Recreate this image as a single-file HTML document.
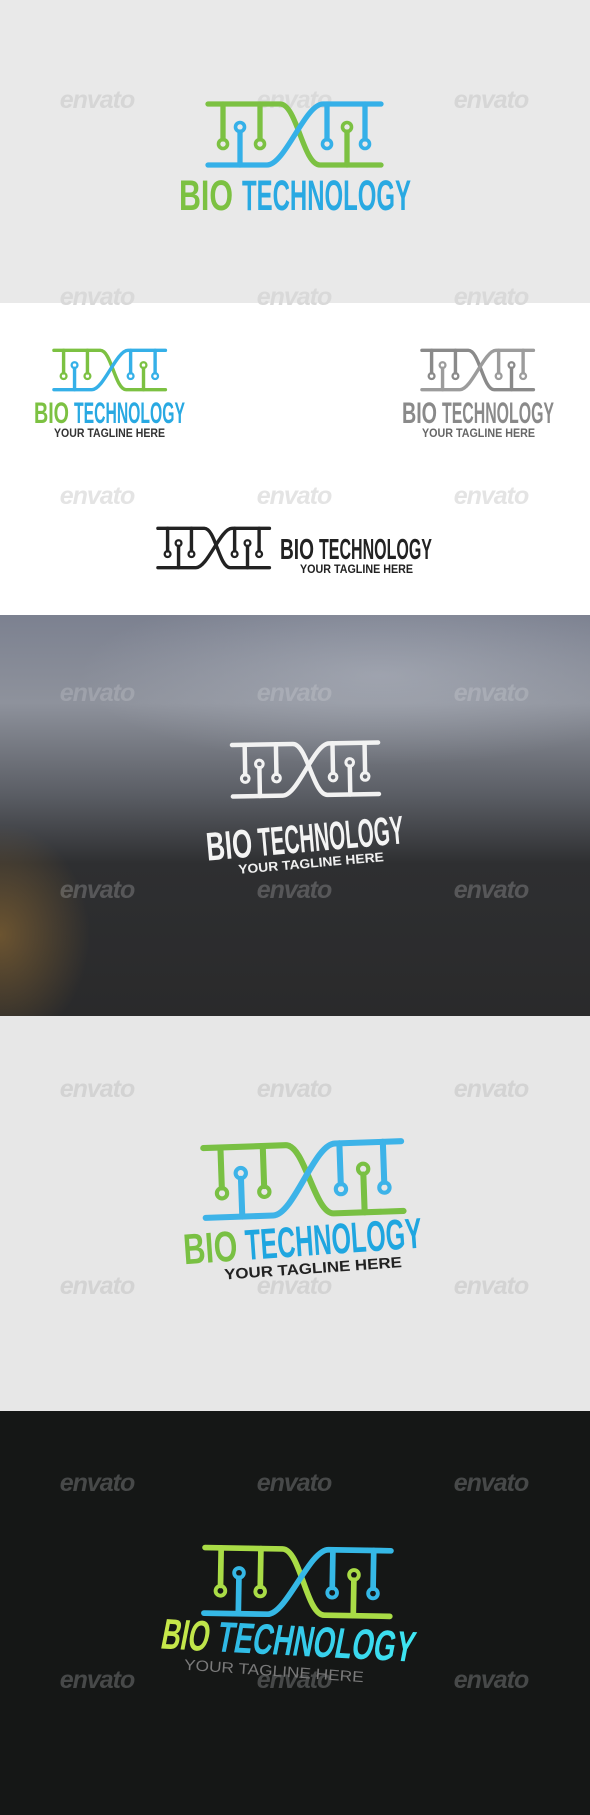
<!DOCTYPE html>
<html><head><meta charset="utf-8"><style>
*{margin:0;padding:0}
html,body{width:590px;height:1815px;overflow:hidden}
body{position:relative;background:#fff;font-family:"Liberation Sans",sans-serif}
.s{position:absolute;left:0;width:590px}
.wm{position:absolute;font:italic bold 25px "Liberation Sans",sans-serif;letter-spacing:-1px;width:110px;text-align:center}
svg{position:absolute}
</style></head><body>
<svg width="0" height="0" style="position:absolute">
<defs>
<symbol id="dna" viewBox="0 0 180 67">
<g fill="none" stroke-linecap="round" stroke-width="5.3">
<g stroke="var(--a)">
<path d="M3,3 H75 C92,3 98,64 115,64 H176"/>
<path d="M18,3 V38 M55,3 V38 M142,64 V31" />
<circle cx="18" cy="43" r="4.5" stroke-width="3.6"/>
<circle cx="55" cy="43" r="4.5" stroke-width="3.6"/>
<circle cx="142" cy="26" r="4.5" stroke-width="3.6"/>
</g>
<g stroke="var(--b)">
<path d="M3,64 H62 C80,64 100,3 118,3 H176"/>
<path d="M35,64 V31 M122,3 V38 M160,3 V38"/>
<circle cx="35" cy="26" r="4.5" stroke-width="3.6"/>
<circle cx="122" cy="43" r="4.5" stroke-width="3.6"/>
<circle cx="160" cy="43" r="4.5" stroke-width="3.6"/>
</g>
</g>
</symbol>
<linearGradient id="s5g" x1="0" x2="1"><stop offset="0" stop-color="#c8e84a"/><stop offset="1" stop-color="#8fd44a"/></linearGradient>
<linearGradient id="s5b" x1="0" x2="1"><stop offset="0" stop-color="#2aa8e0"/><stop offset="1" stop-color="#3ee6f2"/></linearGradient>
</defs>
</svg>

<div class="s" style="top:0;height:303px;background:#e9e9e9"></div>
<div class="s" style="top:303px;height:312px;background:#fff"></div>
<div class="s" style="top:615px;height:401px;background:linear-gradient(180deg,#7c8190 0%,#8e929c 22%,#5a5d64 45%,#2e2f31 62%,#2a2a2b 100%)"></div>
<div class="s" style="top:615px;height:401px;background:radial-gradient(ellipse 90px 110px at 0px 320px,rgba(150,110,50,.6),rgba(150,110,50,0));"></div>
<div class="s" style="top:615px;height:401px;background:radial-gradient(ellipse 300px 90px at 380px 60px,rgba(200,205,215,.35),rgba(200,205,215,0));"></div>
<div class="s" style="top:1016px;height:395px;background:#e7e7e7"></div>
<div class="s" style="top:1411px;height:404px;background:#151716"></div>

<div class="wm" style="left:42px;top:86px;color:#d6d6d6">envato</div>
<div class="wm" style="left:239px;top:86px;color:#dadada">envato</div>
<div class="wm" style="left:436px;top:86px;color:#d6d6d6">envato</div>
<div class="wm" style="left:42px;top:283px;color:#d9d9d9">envato</div>
<div class="wm" style="left:239px;top:283px;color:#d9d9d9">envato</div>
<div class="wm" style="left:436px;top:283px;color:#d9d9d9">envato</div>
<div class="wm" style="left:42px;top:482px;color:#e4e4e4">envato</div>
<div class="wm" style="left:239px;top:482px;color:#e4e4e4">envato</div>
<div class="wm" style="left:436px;top:482px;color:#e4e4e4">envato</div>
<div class="wm" style="left:42px;top:679px;color:rgba(255,255,255,.16)">envato</div>
<div class="wm" style="left:239px;top:679px;color:rgba(255,255,255,.16)">envato</div>
<div class="wm" style="left:436px;top:679px;color:rgba(255,255,255,.16)">envato</div>
<div class="wm" style="left:42px;top:876px;color:rgba(255,255,255,.2)">envato</div>
<div class="wm" style="left:239px;top:876px;color:rgba(255,255,255,.2)">envato</div>
<div class="wm" style="left:436px;top:876px;color:rgba(255,255,255,.2)">envato</div>
<div class="wm" style="left:42px;top:1075px;color:#d3d3d3">envato</div>
<div class="wm" style="left:239px;top:1075px;color:#d3d3d3">envato</div>
<div class="wm" style="left:436px;top:1075px;color:#d3d3d3">envato</div>
<div class="wm" style="left:42px;top:1272px;color:#d3d3d3">envato</div>
<div class="wm" style="left:239px;top:1272px;color:#d3d3d3">envato</div>
<div class="wm" style="left:436px;top:1272px;color:#d3d3d3">envato</div>
<div class="wm" style="left:42px;top:1469px;color:#474949">envato</div>
<div class="wm" style="left:239px;top:1469px;color:#474949">envato</div>
<div class="wm" style="left:436px;top:1469px;color:#474949">envato</div>
<div class="wm" style="left:42px;top:1666px;color:#474949">envato</div>
<div class="wm" style="left:239px;top:1666px;color:#474949">envato</div>
<div class="wm" style="left:436px;top:1666px;color:#474949">envato</div>

<svg width="590" height="1815" style="left:0;top:0;overflow:hidden" font-family="'Liberation Sans Narrow','Liberation Sans',sans-serif" font-weight="bold">
<use href="#dna" x="205" y="101" width="180" height="67" style="--a:#7cc142;--b:#35b0e8"/>
<text y="210" font-size="43"><tspan x="179" fill="#7cc142" textLength="54" lengthAdjust="spacingAndGlyphs">BIO</tspan><tspan x="242" fill="#29a9e2" textLength="169" lengthAdjust="spacingAndGlyphs">TECHNOLOGY</tspan></text>

<use href="#dna" x="52" y="348" width="116" height="44" style="--a:#7cc142;--b:#35b0e8"/>
<text y="423" font-size="30"><tspan x="34" fill="#7cc142" textLength="35" lengthAdjust="spacingAndGlyphs">BIO</tspan><tspan x="74" fill="#29a9e2" textLength="111" lengthAdjust="spacingAndGlyphs">TECHNOLOGY</tspan></text>
<text x="54" y="437" font-size="11.5" font-family="'Liberation Sans',sans-serif" fill="#333" textLength="111" lengthAdjust="spacingAndGlyphs">YOUR TAGLINE HERE</text>
<use href="#dna" x="420" y="348" width="116" height="44" style="--a:#8a8a8a;--b:#9c9c9c"/>
<text y="423" font-size="30" fill="#8a8a8a"><tspan x="402" textLength="35" lengthAdjust="spacingAndGlyphs">BIO</tspan><tspan x="442" textLength="112" lengthAdjust="spacingAndGlyphs">TECHNOLOGY</tspan></text>
<text x="422" y="437" font-size="11.5" font-family="'Liberation Sans',sans-serif" fill="#666" textLength="113" lengthAdjust="spacingAndGlyphs">YOUR TAGLINE HERE</text>
<use href="#dna" x="156" y="526" width="116" height="44" style="--a:#222;--b:#222"/>
<text y="559" font-size="29" fill="#222"><tspan x="280" textLength="34" lengthAdjust="spacingAndGlyphs">BIO</tspan><tspan x="319" textLength="113" lengthAdjust="spacingAndGlyphs">TECHNOLOGY</tspan></text>
<text x="300" y="573" font-size="11.5" font-family="'Liberation Sans',sans-serif" fill="#222" textLength="113" lengthAdjust="spacingAndGlyphs">YOUR TAGLINE HERE</text>

<g transform="rotate(-1 306 775)">
<use href="#dna" x="230" y="741" width="152" height="57" style="--a:#f2f2f2;--b:#f2f2f2"/>
</g>
<g transform="rotate(-5 305 840)">
<text y="852" font-size="40" fill="#f4f4f4"><tspan x="206" textLength="46" lengthAdjust="spacingAndGlyphs">BIO</tspan><tspan x="258" textLength="146" lengthAdjust="spacingAndGlyphs">TECHNOLOGY</tspan></text>
<text x="236" y="868" font-size="13" font-family="'Liberation Sans',sans-serif" fill="#f0f0f0" textLength="146" lengthAdjust="spacingAndGlyphs">YOUR TAGLINE HERE</text>
</g>

<g transform="rotate(-2 304 1180)">
<use href="#dna" x="201" y="1141" width="206" height="77" style="--a:#79c043;--b:#3db3e8"/>
</g>
<g transform="rotate(-4 302 1240)">
<text y="1256" font-size="43"><tspan x="183" fill="#79c043" textLength="54" lengthAdjust="spacingAndGlyphs">BIO</tspan><tspan x="245" fill="#1fa6e0" textLength="177" lengthAdjust="spacingAndGlyphs">TECHNOLOGY</tspan></text>
<text x="222" y="1274" font-size="15" font-family="'Liberation Sans',sans-serif" fill="#222" textLength="178" lengthAdjust="spacingAndGlyphs">YOUR TAGLINE HERE</text>
</g>

<g transform="rotate(1 300 1580)">
<use href="#dna" x="197" y="1546" width="202" height="72" style="--a:#a9dc46;--b:#35b8e6"/>
</g>
<g transform="rotate(3 285 1650) skewX(-8)">
<text y="1655" font-size="43" transform="translate(232 0)"><tspan x="160" fill="url(#s5g)" textLength="48" lengthAdjust="spacingAndGlyphs">BIO</tspan><tspan x="216" fill="url(#s5b)" textLength="197" lengthAdjust="spacingAndGlyphs">TECHNOLOGY</tspan></text>
</g>
<g transform="rotate(4 275 1670)">
<text x="184" y="1676" font-size="15" font-family="'Liberation Sans',sans-serif" font-weight="normal" fill="#7a7a7a" textLength="180" lengthAdjust="spacingAndGlyphs">YOUR TAGLINE HERE</text>
</g>
</svg>
</body></html>
